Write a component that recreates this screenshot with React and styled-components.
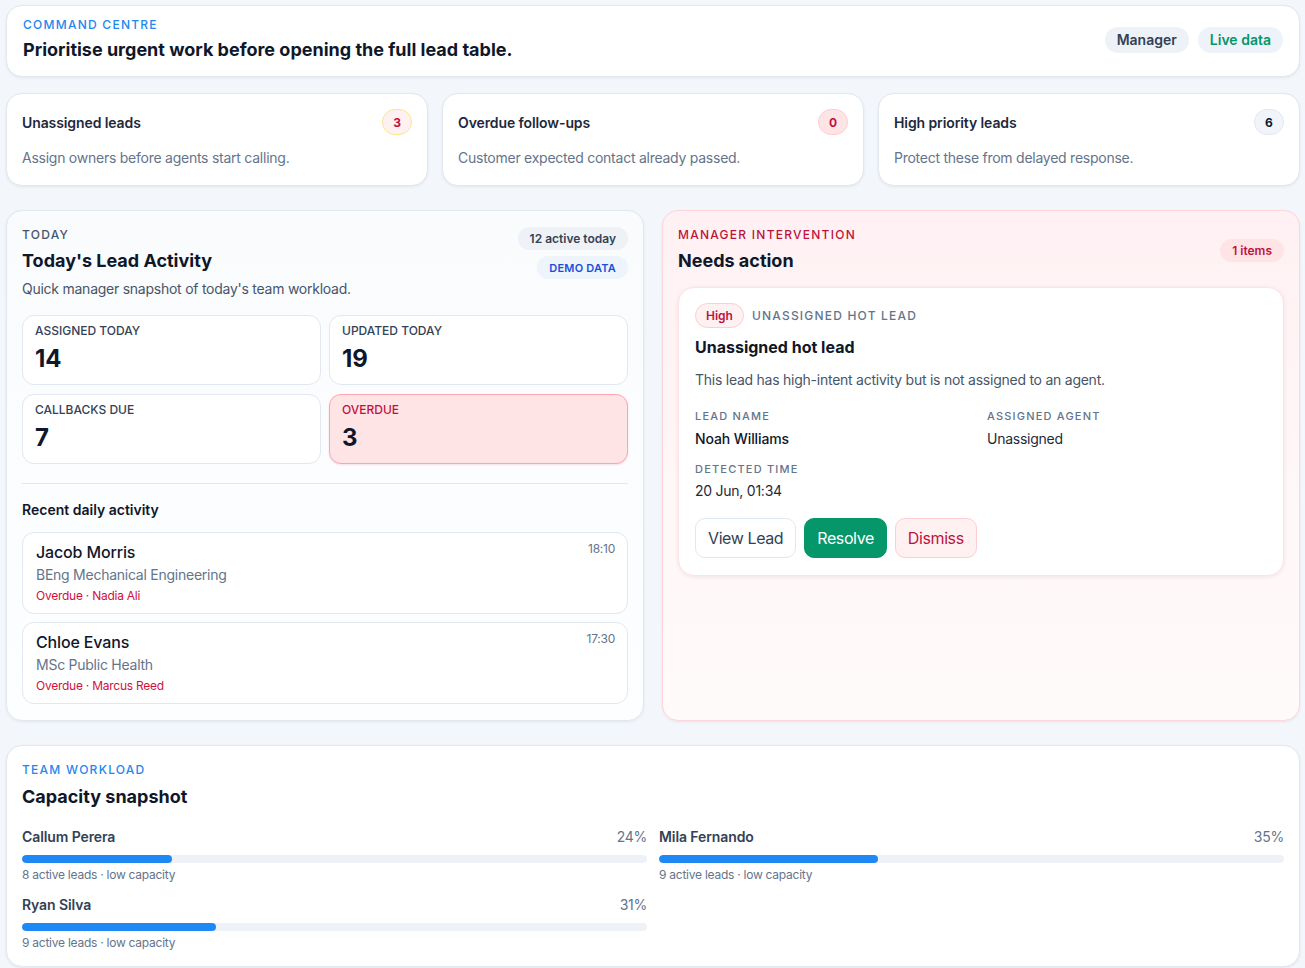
import React from 'react'
import styled, {createGlobalStyle, css} from 'styled-components'

const GlobalStyle = createGlobalStyle`
    * { box-sizing: border-box; }
    body {
        margin: 0;
        background: #f3f6fa;
        font-family: Inter, "Noto Sans", "Liberation Sans", sans-serif;
        color: #0f172a;
        -webkit-font-smoothing: antialiased;
    }
`;

// regular-weight copy in the reference runs a touch tighter than default Inter
const tight = css`
    letter-spacing: -0.25px;
`;

const Page = styled.div`
    padding: 5px 5px 2px 6px;
    display: flex;
    flex-direction: column;
`;

const Card = styled.section`
    background: #fff;
    border: 1px solid #e2e8f0;
    border-radius: 16px;
    box-shadow: 0 1px 3px rgba(15, 23, 42, 0.07);
`;

const HeroCard = styled(Card)`
    display: flex;
    align-items: center;
    justify-content: space-between;
    padding: 11px 16px 14px;
`;

const Eyebrow = styled.div`
    font-size: 12px;
    line-height: 16px;
    font-weight: 500;
    letter-spacing: 1.25px;
    text-transform: uppercase;
    color: ${p => p.tone === 'red' ? '#be123c' : p.tone === 'grey' ? '#475569' : '#2088f0'};
`;

const Title = styled.h1`
    margin: ${p => p.gap || 6}px 0 0;
    font-size: 18px;
    line-height: 24px;
    font-weight: 700;
    color: #0f172a;
`;

const PillRow = styled.div`
    display: flex;
    gap: 9px;
`;

const Pill = styled.span`
    display: inline-flex;
    align-items: center;
    height: ${p => p.small ? 23 : 26}px;
    padding: 0 12px;
    border-radius: 999px;
    font-size: ${p => p.small ? 12 : 14}px;
    font-weight: 600;
    background: #eef2f7;
    color: #334155;
    ${p => p.tone === 'green' && css`
        color: #059669;
        background: #edf3f9;
    `}
    ${p => p.tone === 'blue' && css`
        color: #1d4ed8;
        background: #eef4fb;
        font-size: 11px;
        letter-spacing: 0.2px;
    `}
    ${p => p.tone === 'red' && css`
        color: #be123c;
        background: #ffe4e6;
    `}
`;

const KpiRow = styled.div`
    display: grid;
    grid-template-columns: repeat(3, 1fr);
    gap: 14px;
    margin-top: 16px;
`;

const KpiCard = styled(Card)`
    padding: 15px 15px 17px;
`;

const KpiHead = styled.div`
    display: flex;
    align-items: center;
    justify-content: space-between;
`;

const KpiTitle = styled.div`
    font-size: 14px;
    font-weight: 600;
    color: #1e293b;
    letter-spacing: -0.1px;
`;

const KpiText = styled.div`
    margin-top: 13px;
    font-size: 14px;
    line-height: 20px;
    color: #64748b;
    ${tight}
`;

const CountBadge = styled.span`
    min-width: 30px;
    height: 26px;
    padding: 0 8px;
    border-radius: 999px;
    display: inline-flex;
    align-items: center;
    justify-content: center;
    font-size: 12px;
    font-weight: 700;
    border: 1px solid #e2e8f0;
    background: #f1f5f9;
    color: #0f172a;
    ${p => p.tone === 'amber' && css`
        border-color: #fde68a;
        background: #fff1f2;
        color: #be123c;
    `}
    ${p => p.tone === 'red' && css`
        border-color: #fecdd3;
        background: #ffe4e6;
        color: #be123c;
    `}
`;

const MidRow = styled.div`
    display: grid;
    grid-template-columns: 1fr 1fr;
    gap: 18px;
    margin-top: 24px;
`;

const Panel = styled(Card)`
    padding: 16px 15px 16px;
    ${p => p.tone === 'soft' && css`
        background: linear-gradient(180deg, #f9fbfd 0%, #fdfeff 100%);
    `}
    ${p => p.tone === 'alert' && css`
        background: linear-gradient(180deg, #fff1f3 0%, #fff7f8 60%, #fffafb 100%);
        border-color: #fdd5db;
    `}
`;

const PanelHead = styled.div`
    display: flex;
    justify-content: space-between;
    align-items: ${p => p.center ? 'center' : 'flex-start'};
`;

const Subtitle = styled.p`
    margin: 6px 0 0;
    font-size: 14px;
    line-height: 20px;
    color: #475569;
    ${tight}
`;

const StackRight = styled.div`
    display: flex;
    flex-direction: column;
    align-items: flex-end;
    gap: 6px;
`;

const StatGrid = styled.div`
    display: grid;
    grid-template-columns: 1fr 1fr;
    gap: 9px 8px;
    margin-top: 16px;
`;

const Stat = styled.div`
    border: 1px solid #e2e8f0;
    border-radius: 12px;
    background: #fff;
    padding: 7px 12px 10px;
    ${p => p.alert && css`
        background: #ffe4e6;
        border-color: #fda4af;
        box-shadow: 0 1px 2px rgba(190, 18, 60, 0.12);
    `}
`;

const StatLabel = styled.div`
    font-size: 12px;
    line-height: 16px;
    font-weight: 500;
    color: ${p => p.alert ? '#be123c' : '#334155'};
`;

const StatValue = styled.div`
    margin-top: 5px;
    font-size: 24px;
    line-height: 30px;
    font-weight: 700;
    color: #0f172a;
`;

const Divider = styled.hr`
    border: 0;
    border-top: 1px solid #e2e8f0;
    margin: 19px 0 0;
`;

const SectionLabel = styled.div`
    margin-top: 16px;
    font-size: 14px;
    line-height: 20px;
    font-weight: 600;
    color: #0f172a;
`;

const ActivityList = styled.div`
    display: flex;
    flex-direction: column;
    gap: 8px;
    margin-top: 12px;
`;

const ActivityItem = styled.div`
    display: flex;
    justify-content: space-between;
    align-items: flex-start;
    border: 1px solid #e2e8f0;
    border-radius: 12px;
    background: #fff;
    padding: 8px 12px 9px 13px;
`;

const ActName = styled.div`
    font-size: 16px;
    line-height: 22px;
    font-weight: 500;
    color: #0f172a;
    letter-spacing: -0.15px;
`;

const ActSub = styled.div`
    margin-top: 2px;
    font-size: 14px;
    line-height: 20px;
    color: #64748b;
    ${tight}
`;

const ActMeta = styled.div`
    margin-top: 3px;
    font-size: 12px;
    line-height: 16px;
    color: #d0103d;
    ${tight}
`;

const ActTime = styled.div`
    font-size: 12px;
    line-height: 16px;
    color: #64748b;
    ${tight}
`;

const AlertCard = styled.div`
    margin-top: 14px;
    background: #fff;
    border: 1px solid #fde2e6;
    border-radius: 16px;
    box-shadow: 0 1px 4px rgba(15, 23, 42, 0.08);
    padding: 15px 16px 17px;
`;

const TagRow = styled.div`
    display: flex;
    align-items: center;
    gap: 8px;
`;

const PriorityTag = styled.span`
    height: 25px;
    padding: 0 10px;
    display: inline-flex;
    align-items: center;
    border-radius: 999px;
    border: 1px solid #fecdd3;
    background: #fff1f2;
    color: #be123c;
    font-size: 12px;
    font-weight: 600;
`;

const KindLabel = styled.span`
    font-size: 12px;
    letter-spacing: 1.2px;
    font-weight: 500;
    color: #64748b;
`;

const AlertTitle = styled.h3`
    margin: 8px 0 0;
    font-size: 16px;
    line-height: 22px;
    font-weight: 700;
    color: #0f172a;
`;

const AlertText = styled.p`
    margin: 12px 0 0;
    font-size: 14px;
    line-height: 20px;
    color: #475569;
    ${tight}
`;

const FieldGrid = styled.div`
    display: grid;
    grid-template-columns: 1fr 1fr;
    column-gap: 12px;
    row-gap: 13px;
    margin-top: 19px;
`;

const FieldLabel = styled.div`
    font-size: 11px;
    line-height: 14px;
    letter-spacing: 1.2px;
    font-weight: 500;
    color: #64748b;
`;

const FieldValue = styled.div`
    margin-top: ${p => p.gap || 6}px;
    font-size: 14px;
    line-height: 20px;
    font-weight: ${p => p.strong ? 500 : 400};
    color: ${p => p.strong ? '#0f172a' : '#1e293b'};
    letter-spacing: ${p => p.strong ? '-0.1px' : '-0.25px'};
`;

const Actions = styled.div`
    display: flex;
    gap: 8px;
    margin-top: 17px;
`;

const Button = styled.button`
    height: 40px;
    padding: 0 12px;
    border-radius: 10px;
    font-family: inherit;
    font-size: 16px;
    letter-spacing: -0.4px;
    border: 1px solid #e2e8f0;
    background: #fff;
    color: #334155;
    ${p => p.variant === 'primary' && css`
        background: #059669;
        border-color: #059669;
        color: #fff;
    `}
    ${p => p.variant === 'danger' && css`
        background: #fff1f2;
        border-color: #fecdd3;
        color: #be123c;
    `}
`;

const WorkloadCard = styled(Card)`
    margin-top: 24px;
    padding: 16px 15px 15px;
`;

const WorkloadGrid = styled.div`
    display: grid;
    grid-template-columns: 1fr 1fr;
    column-gap: 12px;
    row-gap: 12px;
    margin-top: 18px;
`;

const Member = styled.div``;

const MemberHead = styled.div`
    display: flex;
    justify-content: space-between;
    font-size: 14px;
    line-height: 20px;
`;

const MemberName = styled.span`
    font-weight: 600;
    color: #334155;
    letter-spacing: -0.1px;
`;

const MemberPct = styled.span`
    color: #64748b;
    ${tight}
`;

const Track = styled.div`
    margin-top: 8px;
    height: 8px;
    border-radius: 999px;
    background: #eef2f7;
    overflow: hidden;
`;

const Fill = styled.div`
    height: 100%;
    border-radius: 999px;
    background: #1e88f5;
`;

const MemberSub = styled.div`
    margin-top: 4px;
    font-size: 12px;
    line-height: 16px;
    color: #64748b;
    ${tight}
`;

const kpis = [
    {title: 'Unassigned leads', text: 'Assign owners before agents start calling.', count: 3, tone: 'amber'},
    {title: 'Overdue follow-ups', text: 'Customer expected contact already passed.', count: 0, tone: 'red'},
    {title: 'High priority leads', text: 'Protect these from delayed response.', count: 6}
];

const stats = [
    {label: 'ASSIGNED TODAY', value: 14},
    {label: 'UPDATED TODAY', value: 19},
    {label: 'CALLBACKS DUE', value: 7},
    {label: 'OVERDUE', value: 3, alert: true}
];

const activity = [
    {name: 'Jacob Morris', course: 'BEng Mechanical Engineering', meta: 'Overdue · Nadia Ali', time: '18:10'},
    {name: 'Chloe Evans', course: 'MSc Public Health', meta: 'Overdue · Marcus Reed', time: '17:30'}
];

const team = [
    {name: 'Callum Perera', pct: 24, leads: 8},
    {name: 'Mila Fernando', pct: 35, leads: 9},
    {name: 'Ryan Silva', pct: 31, leads: 9}
];

export default function App() {
    return (
        <Page>
            <GlobalStyle/>
            <HeroCard>
                <div>
                    <Eyebrow>Command centre</Eyebrow>
                    <Title gap={5}>Prioritise urgent work before opening the full lead table.</Title>
                </div>
                <PillRow>
                    <Pill>Manager</Pill>
                    <Pill tone="green">Live data</Pill>
                </PillRow>
            </HeroCard>

            <KpiRow>
                {kpis.map(k => (
                    <KpiCard key={k.title}>
                        <KpiHead>
                            <KpiTitle>{k.title}</KpiTitle>
                            <CountBadge tone={k.tone}>{k.count}</CountBadge>
                        </KpiHead>
                        <KpiText>{k.text}</KpiText>
                    </KpiCard>
                ))}
            </KpiRow>

            <MidRow>
                <Panel tone="soft">
                    <PanelHead>
                        <div>
                            <Eyebrow tone="grey">Today</Eyebrow>
                            <Title>Today's Lead Activity</Title>
                            <Subtitle>Quick manager snapshot of today's team workload.</Subtitle>
                        </div>
                        <StackRight>
                            <Pill small>12 active today</Pill>
                            <Pill small tone="blue">DEMO DATA</Pill>
                        </StackRight>
                    </PanelHead>
                    <StatGrid>
                        {stats.map(s => (
                            <Stat key={s.label} alert={s.alert}>
                                <StatLabel alert={s.alert}>{s.label}</StatLabel>
                                <StatValue>{s.value}</StatValue>
                            </Stat>
                        ))}
                    </StatGrid>
                    <Divider/>
                    <SectionLabel>Recent daily activity</SectionLabel>
                    <ActivityList>
                        {activity.map(a => (
                            <ActivityItem key={a.name}>
                                <div>
                                    <ActName>{a.name}</ActName>
                                    <ActSub>{a.course}</ActSub>
                                    <ActMeta>{a.meta}</ActMeta>
                                </div>
                                <ActTime>{a.time}</ActTime>
                            </ActivityItem>
                        ))}
                    </ActivityList>
                </Panel>

                <Panel tone="alert">
                    <PanelHead center>
                        <div>
                            <Eyebrow tone="red">Manager intervention</Eyebrow>
                            <Title>Needs action</Title>
                        </div>
                        <Pill small tone="red">1 items</Pill>
                    </PanelHead>
                    <AlertCard>
                        <TagRow>
                            <PriorityTag>High</PriorityTag>
                            <KindLabel>UNASSIGNED HOT LEAD</KindLabel>
                        </TagRow>
                        <AlertTitle>Unassigned hot lead</AlertTitle>
                        <AlertText>This lead has high-intent activity but is not assigned to an agent.</AlertText>
                        <FieldGrid>
                            <div>
                                <FieldLabel>LEAD NAME</FieldLabel>
                                <FieldValue strong>Noah Williams</FieldValue>
                            </div>
                            <div>
                                <FieldLabel>ASSIGNED AGENT</FieldLabel>
                                <FieldValue>Unassigned</FieldValue>
                            </div>
                            <div>
                                <FieldLabel>DETECTED TIME</FieldLabel>
                                <FieldValue gap={5}>20 Jun, 01:34</FieldValue>
                            </div>
                        </FieldGrid>
                        <Actions>
                            <Button>View Lead</Button>
                            <Button variant="primary">Resolve</Button>
                            <Button variant="danger">Dismiss</Button>
                        </Actions>
                    </AlertCard>
                </Panel>
            </MidRow>

            <WorkloadCard>
                <Eyebrow>Team workload</Eyebrow>
                <Title gap={7}>Capacity snapshot</Title>
                <WorkloadGrid>
                    {team.map(m => (
                        <Member key={m.name}>
                            <MemberHead>
                                <MemberName>{m.name}</MemberName>
                                <MemberPct>{m.pct}%</MemberPct>
                            </MemberHead>
                            <Track>
                                <Fill style={{width: m.pct + '%'}}/>
                            </Track>
                            <MemberSub>{m.leads} active leads · low capacity</MemberSub>
                        </Member>
                    ))}
                </WorkloadGrid>
            </WorkloadCard>
        </Page>
    )
}
